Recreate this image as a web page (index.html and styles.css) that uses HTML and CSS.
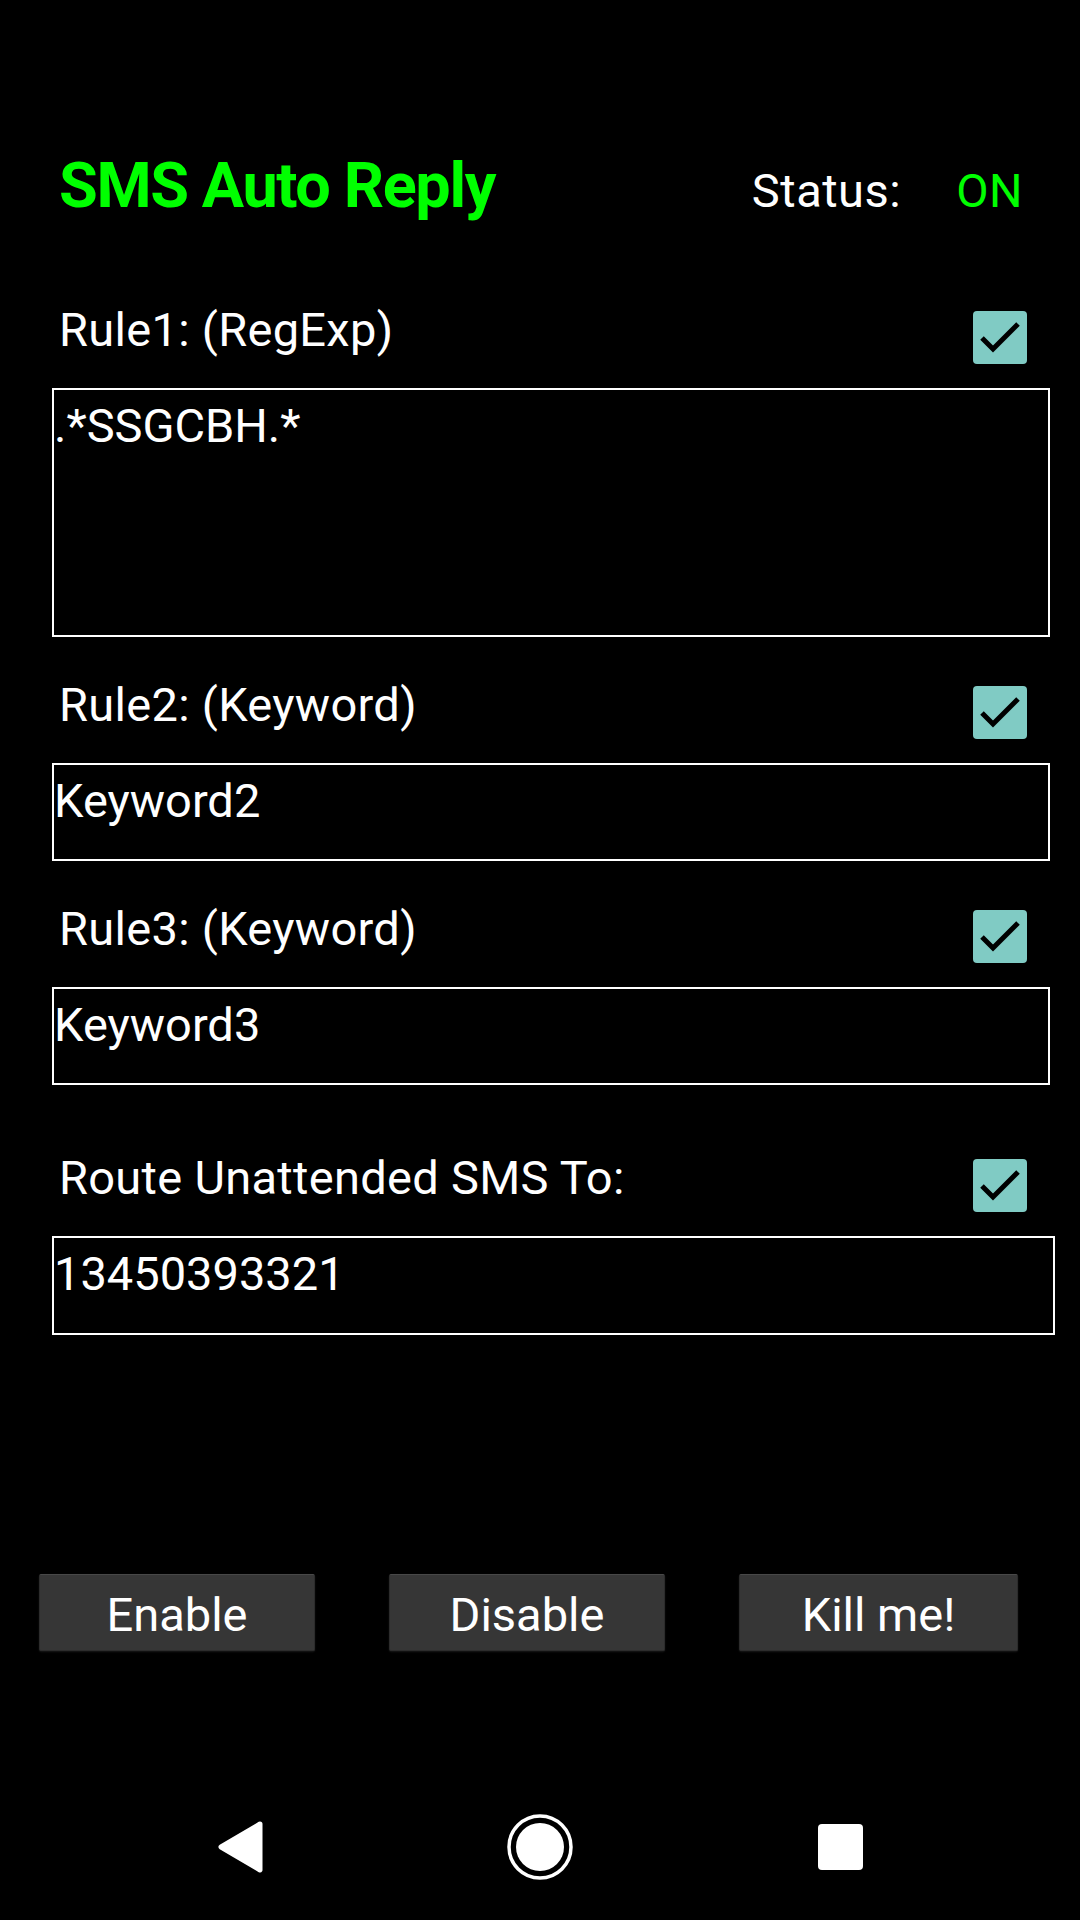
FILE: index.html
```html
<!DOCTYPE html>
<html>
<head>
<meta charset="utf-8">
<link rel="stylesheet" href="styles.css">
</head>
<body>
<div class="app">
  <header class="header">
    <div class="title">SMS Auto Reply</div>
    <div class="status">
      <span class="status-label">Status:</span>
      <span class="status-value">ON</span>
    </div>
  </header>

  <main class="rules">
    <section class="rule">
      <div class="rule-head">
        <span class="rule-label">Rule1: (RegExp)</span>
        <span class="checkbox"><svg viewBox="0 0 54 53" width="54" height="53"><polyline points="9,27 20,38 45,13" fill="none" stroke="#000" stroke-width="5"/></svg></span>
      </div>
      <div class="field field-tall">.*SSGCBH.*</div>
    </section>

    <section class="rule">
      <div class="rule-head">
        <span class="rule-label">Rule2: (Keyword)</span>
        <span class="checkbox"><svg viewBox="0 0 54 53" width="54" height="53"><polyline points="9,27 20,38 45,13" fill="none" stroke="#000" stroke-width="5"/></svg></span>
      </div>
      <div class="field">Keyword2</div>
    </section>

    <section class="rule">
      <div class="rule-head">
        <span class="rule-label">Rule3: (Keyword)</span>
        <span class="checkbox"><svg viewBox="0 0 54 53" width="54" height="53"><polyline points="9,27 20,38 45,13" fill="none" stroke="#000" stroke-width="5"/></svg></span>
      </div>
      <div class="field">Keyword3</div>
    </section>

    <section class="rule rule-route">
      <div class="rule-head">
        <span class="rule-label">Route Unattended SMS To:</span>
        <span class="checkbox"><svg viewBox="0 0 54 53" width="54" height="53"><polyline points="9,27 20,38 45,13" fill="none" stroke="#000" stroke-width="5"/></svg></span>
      </div>
      <div class="field field-wide">13450393321</div>
    </section>
  </main>

  <div class="buttons">
    <button class="btn">Enable</button>
    <button class="btn">Disable</button>
    <button class="btn btn-wide">Kill me!</button>
  </div>

  <nav class="navbar">
    <div class="nav-slot">
      <svg width="48" height="56" viewBox="0 0 48 56"><polygon points="44,5 5,28 44,51" fill="#fff" stroke="#fff" stroke-width="5" stroke-linejoin="round"/></svg>
    </div>
    <div class="nav-slot">
      <svg width="68" height="68" viewBox="0 0 68 68"><circle cx="34" cy="34" r="31" fill="none" stroke="#fff" stroke-width="3.5"/><circle cx="34" cy="34" r="24" fill="#fff"/></svg>
    </div>
    <div class="nav-slot">
      <div class="recents"></div>
    </div>
  </nav>
</div>
</body>
</html>
```

FILE: styles.css
```css
html, body {
  margin: 0;
  padding: 0;
  background: #000;
}

body {
  width: 1080px;
  height: 1920px;
  overflow: hidden;
  font-family: Roboto, "Noto Sans", sans-serif;
  color: #fff;
}

.app {
  display: flex;
  flex-direction: column;
  height: 1920px;
}

.header {
  display: flex;
  justify-content: space-between;
  align-items: baseline;
  margin-top: 149px;
  padding: 0 57px 0 59px;
  height: 74px;
}

.title {
  font-size: 63px;
  font-weight: bold;
  line-height: 74px;
  letter-spacing: -1.4px;
  color: #00ff00;
}

.status {
  display: flex;
  align-items: baseline;
  gap: 55px;
  font-size: 47px;
  line-height: 55px;
  letter-spacing: 0.5px;
}

.status-label {
  color: #fff;
}

.status-value {
  color: #00ff00;
}

.rules {
  display: flex;
  flex-direction: column;
  margin-top: 88px;
}

.rule + .rule {
  margin-top: 49px;
}

.rule.rule-route {
  margin-top: 74px;
}

.rule-head {
  display: flex;
  justify-content: space-between;
  align-items: flex-start;
  height: 77px;
  padding: 0 53px 0 59px;
}

.rule-label {
  font-size: 47px;
  line-height: 37px;
  letter-spacing: 0.3px;
}

.checkbox {
  display: block;
  width: 54px;
  height: 53px;
  background: #80cbc4;
  border-radius: 4px;
}

.checkbox svg {
  display: block;
}

.field {
  box-sizing: border-box;
  margin-left: 52px;
  width: 998px;
  height: 98px;
  border: 2px solid #fff;
  padding: 8px 0 0 0;
  font-size: 47px;
  line-height: 55px;
  color: #fff;
  white-space: nowrap;
}

.field-tall {
  height: 249px;
}

.field-wide {
  width: 1003px;
  height: 99px;
}

.buttons {
  display: flex;
  gap: 74px;
  padding-left: 39px;
  margin-top: 239px;
}

.btn {
  box-sizing: border-box;
  width: 276px;
  height: 77px;
  padding: 0;
  margin: 0;
  background: #363636;
  border: 1px solid #2c2c2c;
  border-top-color: #484848;
  border-radius: 2px;
  box-shadow: 0 1px 2px rgba(80, 80, 80, 0.3);
  color: #fff;
  font-family: Roboto, "Noto Sans", sans-serif;
  font-size: 47px;
  line-height: 79px;
  text-align: center;
  overflow: hidden;
}

.btn-wide {
  width: 279px;
}

.navbar {
  display: grid;
  grid-template-columns: repeat(3, 300px);
  justify-content: center;
  align-items: center;
  margin-top: auto;
  height: 146px;
}

.nav-slot {
  display: flex;
  justify-content: center;
  align-items: center;
}

.nav-slot svg {
  display: block;
}

.recents {
  width: 45px;
  height: 46px;
  background: #fff;
  border-radius: 4px;
}
```
